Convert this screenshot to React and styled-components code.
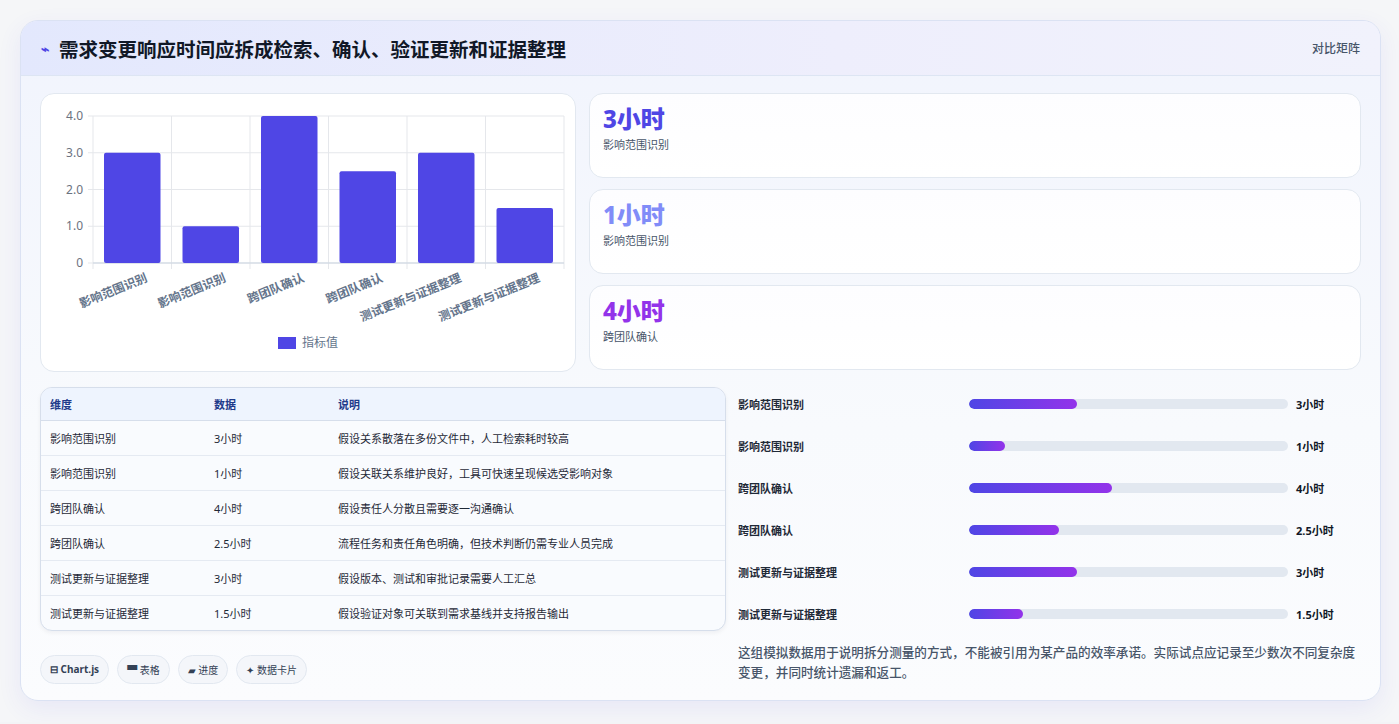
import React from 'react';
import styled, { createGlobalStyle } from 'styled-components';

const ROWS = [
  { name: '影响范围识别', value: 3, label: '3小时', note: '假设关系散落在多份文件中，人工检索耗时较高' },
  { name: '影响范围识别', value: 1, label: '1小时', note: '假设关联关系维护良好，工具可快速呈现候选受影响对象' },
  { name: '跨团队确认', value: 4, label: '4小时', note: '假设责任人分散且需要逐一沟通确认' },
  { name: '跨团队确认', value: 2.5, label: '2.5小时', note: '流程任务和责任角色明确，但技术判断仍需专业人员完成' },
  { name: '测试更新与证据整理', value: 3, label: '3小时', note: '假设版本、测试和审批记录需要人工汇总' },
  { name: '测试更新与证据整理', value: 1.5, label: '1.5小时', note: '假设验证对象可关联到需求基线并支持报告输出' },
];

const STATS = [
  { value: '3小时', label: '影响范围识别', color: '#4f46e5' },
  { value: '1小时', label: '影响范围识别', color: '#818cf8' },
  { value: '4小时', label: '跨团队确认', color: '#9333ea' },
];

const GlobalStyle = createGlobalStyle`
  body { margin: 0; background: #f3f4f6; font-family: "Noto Sans", "Noto Sans CJK SC", sans-serif; }
`;

function BarChart() {
  const x0 = 52, x1 = 523, y0 = 22, y1 = 169;
  const cw = (x1 - x0) / 6;
  const ys = (v) => y1 - (v / 4) * (y1 - y0);
  return (
    <svg width="534" height="277" viewBox="0 0 534 277">
      {[0, 1, 2, 3, 4].map((t) => (
        <g key={t}>
          <line x1={x0 - 5} x2={x1} y1={ys(t)} y2={ys(t)} stroke="#e5e7eb" />
          <text x={x0 - 10} y={ys(t) + 4} textAnchor="end" fontSize="12" fill="#6b7280">{t === 0 ? '0' : t + '.0'}</text>
        </g>
      ))}
      {[0, 1, 2, 3, 4, 5, 6].map((i) => (
        <line key={i} x1={x0 + i * cw} x2={x0 + i * cw} y1={y0} y2={y1 + 6} stroke="#e5e7eb" />
      ))}
      <line x1={x0} x2={x1} y1={y1} y2={y1} stroke="#cbd5e1" />
      {ROWS.map((r, i) => (
        <g key={i}>
          <rect x={x0 + i * cw + 11} y={ys(r.value)} width={cw - 22} height={y1 - ys(r.value)} rx="2" fill="#4f46e5" />
          <text transform={`translate(${x0 + i * cw + cw / 2 + 16},${y1 + 18}) rotate(-22)`} textAnchor="end" fontSize="12" fontWeight="600" fill="#64748b">{r.name}</text>
        </g>
      ))}
      <rect x="237" y="243" width="18" height="12" fill="#4f46e5" />
      <text x="261" y="253" fontSize="12" fill="#64748b">指标值</text>
    </svg>
  );
}

export default function App() {
  return (
    <>
      <GlobalStyle />
      <Page>
        <Panel>
          <Header>
            <Title><Spark>⌁</Spark>需求变更响应时间应拆成检索、确认、验证更新和证据整理</Title>
            <Tag>对比矩阵</Tag>
          </Header>
          <Body>
            <TopGrid>
              <ChartCard><BarChart /></ChartCard>
              <Stats>
                {STATS.map((s, i) => (
                  <StatCard key={i}>
                    <StatValue $color={s.color}>{s.value}</StatValue>
                    <StatLabel>{s.label}</StatLabel>
                  </StatCard>
                ))}
              </Stats>
            </TopGrid>
            <BottomGrid>
              <LeftCol>
                <Table>
                  <thead>
                    <tr><Th>维度</Th><Th>数据</Th><Th>说明</Th></tr>
                  </thead>
                  <tbody>
                    {ROWS.map((r, i) => (
                      <tr key={i}><Td>{r.name}</Td><Td>{r.label}</Td><Td>{r.note}</Td></tr>
                    ))}
                  </tbody>
                </Table>
                <Chips>
                  <Chip><b>⊟ Chart.js</b></Chip>
                  <Chip>▀ 表格</Chip>
                  <Chip>▰ 进度</Chip>
                  <Chip>✦ 数据卡片</Chip>
                </Chips>
              </LeftCol>
              <RightCol>
                {ROWS.map((r, i) => (
                  <ProgRow key={i}>
                    <ProgName>{r.name}</ProgName>
                    <Track><Fill style={{ width: `${(r.value / 8.9) * 100}%` }} /></Track>
                    <ProgVal>{r.label}</ProgVal>
                  </ProgRow>
                ))}
                <Note>这组模拟数据用于说明拆分测量的方式，不能被引用为某产品的效率承诺。实际试点应记录至少数次不同复杂度变更，并同时统计遗漏和返工。</Note>
              </RightCol>
            </BottomGrid>
          </Body>
        </Panel>
      </Page>
    </>
  );
}

const Page = styled.div`
  padding: 20px 20px 21px 20px; width: 1399px; box-sizing: border-box; background: #f5f6f8;
`;

const Panel = styled.div`
  width: 1359px; border: 1px solid #dbe2f3; border-radius: 18px; overflow: hidden;
  background: linear-gradient(180deg, #f1f4fd 0%, #f8fafd 60%, #fbfcfe 100%);
  box-shadow: 0 8px 24px rgba(79, 70, 229, 0.08);
`;

const Header = styled.div`
  height: 54px; display: flex; align-items: center; justify-content: space-between;
  padding: 0 20px; border-bottom: 1px solid #dde5f3;
  background: linear-gradient(90deg, #e3e8fd 0%, #eeeefc 60%, #f1f2fc 100%);
`;

const Title = styled.h1`
  margin: 0; display: flex; align-items: center; gap: 10px;
  font-size: 19.5px; font-weight: 700; color: #111827;
`;

const Spark = styled.span`
  color: #4f46e5; font-size: 14px;
`;

const Tag = styled.span`
  font-size: 12px; color: #475569; font-weight: 500;
`;

const Body = styled.div`
  padding: 17px 19px 16px 19px; display: flex; flex-direction: column; gap: 15px;
`;

const TopGrid = styled.div`
  display: grid; grid-template-columns: 536px 1fr; gap: 13px;
`;

const ChartCard = styled.div`
  height: 277px; background: #fff; border: 1px solid #e2e8f0; border-radius: 14px;
`;

const Stats = styled.div`
  display: flex; flex-direction: column; gap: 11px;
`;

const StatCard = styled.div`
  height: 85px; box-sizing: border-box; padding: 9px 13px;
  background: linear-gradient(180deg, #fdfdff 0%, #fff 100%);
  border: 1px solid #e2e8f0; border-radius: 14px;
`;

const StatValue = styled.div`
  font-size: 24px; font-weight: 800; color: ${({ $color }) => $color}; line-height: 32px;
`;

const StatLabel = styled.div`
  font-size: 11px; color: #475569; margin-top: 1px;
`;

const BottomGrid = styled.div`
  display: grid; grid-template-columns: 686px 1fr; gap: 12px;
`;

const LeftCol = styled.div`
  display: flex; flex-direction: column; gap: 24px;
`;

const Table = styled.table`
  width: 100%; border-collapse: separate; border-spacing: 0;
  border: 1px solid #d6deeb; border-radius: 12px; overflow: hidden; background: #f9fbfe;
  box-shadow: 0 2px 4px rgba(15, 23, 42, 0.05);
`;

const Th = styled.th`
  text-align: left; font-size: 11px; font-weight: 700; color: #1e3a8a;
  background: #eef4fe; height: 32px; padding: 0 9px; border-bottom: 1px solid #d6deeb;
  &:first-child { width: 146px; } &:nth-child(2) { width: 106px; }
`;

const Td = styled.td`
  font-size: 11px; color: #1f2937; height: 34px; padding: 0 9px;
  border-bottom: 1px solid #e5eaf2;
  tr:last-child > & { border-bottom: none; }
`;

const Chips = styled.div`
  display: flex; gap: 8px;
`;

const Chip = styled.span`
  font-size: 10px; color: #334155; padding: 6px 9px; border-radius: 16px;
  background: #f4f6fa; border: 1px solid #e2e8f0;
`;

const RightCol = styled.div`
  display: flex; flex-direction: column; margin-top: -4px;
`;

const ProgRow = styled.div`
  display: grid; grid-template-columns: 223px 319px 1fr; align-items: center; gap: 8px; height: 42px;
`;

const ProgName = styled.span`
  font-size: 11px; font-weight: 600; color: #1f2937;
`;

const Track = styled.div`
  height: 10px; border-radius: 5px; background: #e2e8f0; overflow: hidden;
`;

const Fill = styled.div`
  height: 100%; border-radius: 5px; background: linear-gradient(90deg, #4f46e5, #9333ea);
`;

const ProgVal = styled.span`
  font-size: 11px; font-weight: 700; color: #111827;
`;

const Note = styled.p`
  margin: 8px 0 0; font-size: 12.6px; line-height: 20px; color: #475569; font-weight: 500;
`;
